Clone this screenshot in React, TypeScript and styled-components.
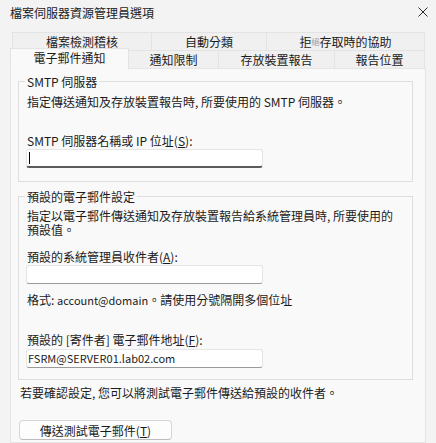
import React from "react";
import styled, { createGlobalStyle } from "styled-components";

const GlobalStyle = createGlobalStyle`
  html, body {
    margin: 0;
    padding: 0;
    background: #f3f3f3;
  }
  body {
    font-family: "Noto Sans CJK TC", "Noto Sans", sans-serif;
    font-size: 12px;
    color: #1b1b1b;
  }
`;

const Window = styled.div`
  width: 436px;
  height: 443px;
  overflow: hidden;
  display: flex;
  flex-direction: column;
  background: #f3f3f3;
`;

const TitleBar = styled.div`
  box-sizing: border-box;
  height: 32px;
  display: flex;
  justify-content: space-between;
  align-items: flex-start;
  padding: 5px 0 0 10px;
  line-height: 16px;
`;

const CloseButton = styled.div`
  width: 10px;
  height: 10px;
  margin: 2px 8px 0 0;
  display: flex;
`;

const TabStrip = styled.div`
  margin-left: 10px;
  width: 416px;
  display: flex;
  flex-direction: column;
`;

const TabRow = styled.div<{ $indent: number }>`
  display: flex;
  height: 18px;
  padding-left: ${(p) => p.$indent}px;
  align-items: flex-start;
`;

const Tab = styled.div<{ $w: number; $active?: boolean }>`
  box-sizing: border-box;
  width: ${(p) => p.$w}px;
  height: ${(p) => (p.$active ? 21 : 18)}px;
  margin-top: ${(p) => (p.$active ? -2 : 0)}px;
  display: flex;
  align-items: center;
  justify-content: center;
  line-height: 16px;
  background: ${(p) => (p.$active ? "#f9f9f9" : "#f0f0f0")};
  border-top: 1px solid #e3e3e3;
  border-right: 1px solid #e3e3e3;
  border-left: ${(p) => (p.$active ? "1px solid #e3e3e3" : "none")};
  padding-bottom: ${(p) => (p.$active ? 2 : 0)}px;
  position: relative;
  z-index: ${(p) => (p.$active ? 1 : 0)};
  &:first-child {
    border-left: 1px solid #e3e3e3;
  }
`;

const FadedGlyph = styled.span`
  font-size: 8px;
  color: #9a9a9a;
  line-height: 8px;
`;

const Panel = styled.div`
  box-sizing: border-box;
  flex: 1;
  margin-left: 10px;
  width: 416px;
  background: #f9f9f9;
  border: 1px solid #e5e5e5;
  display: flex;
  flex-direction: column;
`;

const Group = styled.fieldset<{ $top: number; $bottom: number }>`
  margin: ${(p) => p.$top}px 12px 0 7px;
  padding: 0 8px ${(p) => p.$bottom}px;
  border: 1px solid #dedede;
  min-width: 0;
  display: flex;
  flex-direction: column;
  align-items: flex-start;
`;

const GroupTitle = styled.legend`
  padding: 0 2px;
  margin-left: -2px;
  line-height: 15px;
`;

const Text = styled.div<{ $top: number; $lh?: number }>`
  margin-top: ${(p) => p.$top}px;
  line-height: ${(p) => p.$lh ?? 15}px;
  white-space: nowrap;
`;

const Latin = styled.span`
  font-size: 11px;
`;

const Mnemonic = styled.span`
  text-decoration: underline;
  text-underline-offset: 1px;
`;

const Field = styled.div<{ $top: number; $focused?: boolean }>`
  box-sizing: border-box;
  margin: ${(p) => p.$top}px 0 0 -1px;
  width: 237px;
  height: 19px;
  background: #ffffff;
  border: 1px solid #e5e5e5;
  border-bottom: ${(p) => (p.$focused ? "2px solid #5c5c5c" : "1px solid #9a9a9a")};
  border-radius: 3px;
  padding-left: 1px;
  display: flex;
  align-items: center;
  font-size: 11px;
  line-height: 15px;
  white-space: nowrap;
`;

const Caret = styled.span`
  width: 1px;
  height: 12px;
  margin-left: 1px;
  background: #000;
`;

const Note = styled.div`
  margin: 5px 0 0 9px;
  line-height: 15px;
  white-space: nowrap;
`;

const Button = styled.div`
  box-sizing: border-box;
  margin: 20px 0 0 8px;
  width: 153px;
  height: 20px;
  background: #fdfdfd;
  border: 1px solid #d5d5d5;
  border-bottom-color: #bdbdbd;
  border-radius: 4px;
  display: flex;
  align-items: center;
  justify-content: center;
  line-height: 15px;
`;

export default function App() {
  return (
    <>
      <GlobalStyle />
      <Window>
        <TitleBar>
          <span>檔案伺服器資源管理員選項</span>
          <CloseButton>
            <svg width="10" height="10" viewBox="0 0 10 10">
              <path d="M0.5 0.5 L9.5 9.5 M9.5 0.5 L0.5 9.5" stroke="#2b2b2b" strokeWidth="1" fill="none" />
            </svg>
          </CloseButton>
        </TitleBar>

        <TabStrip>
          <TabRow $indent={2}>
            <Tab $w={140}>檔案檢測稽核</Tab>
            <Tab $w={115}>自動分類</Tab>
            <Tab $w={158}>
              拒<FadedGlyph>絕</FadedGlyph>存取時的協助
            </Tab>
          </TabRow>
          <TabRow $indent={0}>
            <Tab $w={119} $active>
              電子郵件通知
            </Tab>
            <Tab $w={90}>通知限制</Tab>
            <Tab $w={116}>存放裝置報告</Tab>
            <Tab $w={90}>報告位置</Tab>
          </TabRow>
        </TabStrip>

        <Panel>
          <Group $top={5} $bottom={13}>
            <GroupTitle>SMTP 伺服器</GroupTitle>
            <Text $top={5}>指定傳送通知及存放裝置報告時, 所要使用的 SMTP 伺服器。</Text>
            <Text $top={24}>
              SMTP 伺服器名稱或 IP 位址(<Mnemonic>S</Mnemonic>):
            </Text>
            <Field $top={1} $focused>
              <Caret />
            </Field>
          </Group>

          <Group $top={7} $bottom={11}>
            <GroupTitle>預設的電子郵件設定</GroupTitle>
            <Text $top={5} $lh={14}>
              指定以電子郵件傳送通知及存放裝置報告給系統管理員時, 所要使用的
              <br />
              預設值。
            </Text>
            <Text $top={12}>
              預設的系統管理員收件者(<Mnemonic>A</Mnemonic>):
            </Text>
            <Field $top={1} />
            <Text $top={8}>
              格式: <Latin>account@domain</Latin>。請使用分號隔開多個位址
            </Text>
            <Text $top={24}>
              預設的 [寄件者] 電子郵件地址(<Mnemonic>F</Mnemonic>):
            </Text>
            <Field $top={2}>FSRM@SERVER01.lab02.com</Field>
          </Group>

          <Note>若要確認設定, 您可以將測試電子郵件傳送給預設的收件者。</Note>
          <Button>
            傳送測試電子郵件(<Mnemonic>T</Mnemonic>)
          </Button>
        </Panel>
      </Window>
    </>
  );
}
